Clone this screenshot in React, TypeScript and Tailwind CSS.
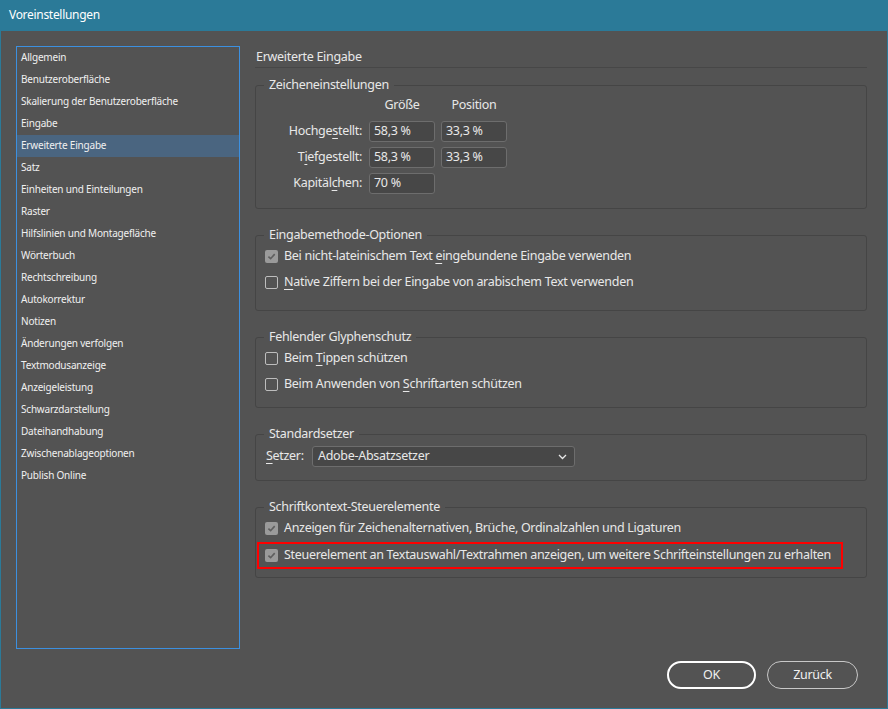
import type { ReactNode } from 'react';

const sections = [
    'Allgemein',
    'Benutzeroberfläche',
    'Skalierung der Benutzeroberfläche',
    'Eingabe',
    'Erweiterte Eingabe',
    'Satz',
    'Einheiten und Einteilungen',
    'Raster',
    'Hilfslinien und Montagefläche',
    'Wörterbuch',
    'Rechtschreibung',
    'Autokorrektur',
    'Notizen',
    'Änderungen verfolgen',
    'Textmodusanzeige',
    'Anzeigeleistung',
    'Schwarzdarstellung',
    'Dateihandhabung',
    'Zwischenablageoptionen',
    'Publish Online',
];

// underlined access key letter
function U({ children }: { children: ReactNode }) {
    return <span className="underline decoration-1 underline-offset-[3px]">{children}</span>;
}

function Check({ checked }: { checked?: boolean }) {
    if (checked) {
        return (
            <span className="flex h-[13px] w-[13px] shrink-0 items-center justify-center rounded-[2px] bg-[#9a9a9a]">
                <svg width="9" height="9" viewBox="0 0 9 9">
                    <path d="M1.4 4.6 L3.6 6.7 L7.7 2.1" fill="none" stroke="#5e5e5e" strokeWidth="1.6" />
                </svg>
            </span>
        );
    }
    return <span className="h-[13px] w-[13px] shrink-0 rounded-[2px] border border-[#bdbdbd]" />;
}

function Group({ title, className = '', children }: { title: string; className?: string; children: ReactNode }) {
    return (
        <fieldset className={`rounded-[3px] border border-[#454545] ${className}`}>
            <legend className="ml-[8px] px-[5px] text-[12.5px] leading-[18px] tracking-[-0.3px]">{title}</legend>
            {children}
        </fieldset>
    );
}

function Field({ value }: { value: string }) {
    return (
        <div className="flex h-[21px] w-[66px] items-center rounded-[3px] border border-[#6d6d6d] bg-[#474747] px-[4px]">
            {value}
        </div>
    );
}

function Option({ checked, children }: { checked?: boolean; children: ReactNode }) {
    return (
        <div className="flex h-[26px] items-center gap-[6px] pl-[9px]">
            <Check checked={checked} />
            <span>{children}</span>
        </div>
    );
}

export default function App() {
    return (
        <div className="flex h-[709px] w-[888px] flex-col border-x border-b border-[#2b7a98] bg-[#535353] font-['Noto_Sans',sans-serif] text-[12.5px] tracking-[-0.3px] text-[#e8e8e8]">
            {/* Title bar */}
            <div className="flex h-[31px] shrink-0 items-center bg-[#2b7a98] pb-[1px] pl-[8px] text-[12px] tracking-[-0.3px] text-white">
                Voreinstellungen
            </div>

            <div className="mt-[15px] flex h-[603px]">
                {/* Section list */}
                <div className="ml-[15px] w-[224px] border border-[#3c90e0]">
                    {sections.map((s) => (
                        <div
                            key={s}
                            className={`flex h-[22px] items-center pb-[2px] pl-[4px] text-[10px] tracking-[-0.2px] text-[#f0f0f0] ${s === 'Erweiterte Eingabe' ? 'bg-[#4a6580]' : ''}`}
                        >
                            {s}
                        </div>
                    ))}
                </div>

                {/* Settings */}
                <div className="ml-[15px] mt-[2px] w-[612px]">
                    <div className="border-b border-[#474747] pb-[1px] pl-[1px] leading-[18px]">Erweiterte Eingabe</div>

                    <Group title="Zeicheneinstellungen" className="mt-[8px] pb-[14px]">
                        <div className="mt-[2px] flex h-[18px] items-center">
                            <div className="w-[113px]" />
                            <div className="w-[66px] text-center">Größe</div>
                            <div className="ml-[6px] w-[66px] text-center">Position</div>
                        </div>
                        <div className="mt-[7px] flex flex-col gap-[5px]">
                            <div className="flex items-center gap-[6px]">
                                <div className="mr-[1px] w-[106px] text-right">Hochge<U>s</U>tellt:</div>
                                <Field value="58,3 %" />
                                <Field value="33,3 %" />
                            </div>
                            <div className="flex items-center gap-[6px]">
                                <div className="mr-[1px] w-[106px] text-right">T<U>i</U>efgestellt:</div>
                                <Field value="58,3 %" />
                                <Field value="33,3 %" />
                            </div>
                            <div className="flex items-center gap-[6px]">
                                <div className="mr-[1px] w-[106px] text-right">Kapitäl<U>c</U>hen:</div>
                                <Field value="70 %" />
                            </div>
                        </div>
                    </Group>

                    <Group title="Eingabemethode-Optionen" className="mt-[17px] pb-[15px]">
                        <div className="-mt-[1px]">
                            <Option checked>
                                Bei nicht-lateinischem Text <U>e</U>ingebundene Eingabe verwenden
                            </Option>
                            <Option>
                                <U>N</U>ative Ziffern bei der Eingabe von arabischem Text verwenden
                            </Option>
                        </div>
                    </Group>

                    <Group title="Fehlender Glyphenschutz" className="mt-[17px] pb-[10px]">
                        <div className="-mt-[1px]">
                            <Option>
                                Beim <U>T</U>ippen schützen
                            </Option>
                            <Option>
                                Beim Anwenden von <U>S</U>chriftarten schützen
                            </Option>
                        </div>
                    </Group>

                    <Group title="Standardsetzer" className="mt-[17px] pb-[13px]">
                        <div className="mt-[3px] flex items-center">
                            <div className="w-[56px] pl-[10px]">
                                <U>S</U>etzer:
                            </div>
                            <div className="flex h-[21px] w-[263px] items-center justify-between rounded-[3px] border border-[#6d6d6d] bg-[#474747] pl-[5px] pr-[7px]">
                                <span>Adobe-Absatzsetzer</span>
                                <svg width="9" height="6" viewBox="0 0 9 6">
                                    <path d="M1 1 L4.5 4.5 L8 1" fill="none" stroke="#e8e8e8" strokeWidth="1.3" />
                                </svg>
                            </div>
                        </div>
                    </Group>

                    <Group title="Schriftkontext-Steuerelemente" className="mt-[17px] pb-[8px]">
                        <div className="-mt-[1px]">
                            <Option checked>Anzeigen für Zeichenalternativen, Brüche, Ordinalzahlen und Ligaturen</Option>
                            <div className="ml-[1px] mt-[1px] flex h-[27px] w-[586px] items-center gap-[6px] border-2 border-[#ff0000] pl-[6px]">
                                <Check checked />
                                <span className="whitespace-nowrap">
                                    Steuerelement an Textauswahl/Textrahmen anzeigen, um weitere Schrifteinstellungen zu erhalten
                                </span>
                            </div>
                        </div>
                    </Group>
                </div>
            </div>

            {/* Footer buttons */}
            <div className="mt-[12px] flex justify-end gap-[11px] pr-[29px]">
                <button className="h-[28px] w-[89px] rounded-full border-2 border-white text-[#f0f0f0]">OK</button>
                <button className="h-[28px] w-[91px] rounded-full border border-[#c8c8c8] text-[#f0f0f0]">Zurück</button>
            </div>
        </div>
    );
}
